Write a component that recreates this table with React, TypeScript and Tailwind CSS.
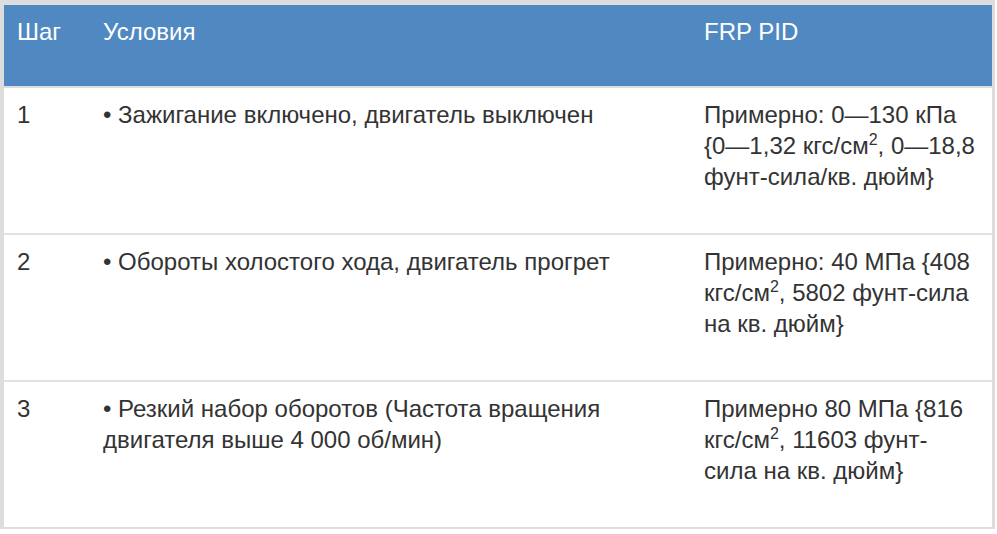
const Sup = () => <sup className="text-[16px] top-[-9px]">2</sup>;

const rows = [
  {
    step: "1",
    cond: "• Зажигание включено, двигатель выключен",
    pid: (
      <>
        Примерно: <span className="whitespace-nowrap">0—130</span> кПа{" "}
        <span className="whitespace-nowrap">{"{"}0—1,32</span> кгс/см<Sup />,{" "}
        <span className="whitespace-nowrap">0—18,8</span> фунт-сила/кв. дюйм{"}"}
      </>
    ),
  },
  {
    step: "2",
    cond: "• Обороты холостого хода, двигатель прогрет",
    pid: (
      <>
        Примерно: 40 МПа {"{"}408 кгс/см<Sup />, 5802 фунт-сила на кв. дюйм{"}"}
      </>
    ),
  },
  {
    step: "3",
    cond: "• Резкий набор оборотов (Частота вращения двигателя выше 4 000 об/мин)",
    pid: (
      <>
        Примерно 80 МПа {"{"}816 кгс/см<Sup />, 11603 фунт-сила на кв. дюйм{"}"}
      </>
    ),
  },
];

export default function App() {
  return (
    <div className="w-[997px] h-[534px] bg-white font-['Liberation_Sans',Arial,sans-serif] text-[24px] leading-[31px] text-[#333]">
      <div className="w-[995px] border-t-[5px] border-l-[4px] border-r-[3px] border-b-[2px] border-[#dddddd]">
        <div className="grid grid-cols-[86px_601px_302px] h-[83px] bg-[#5088c1] text-white border-b-[2px] border-[#dddddd]">
          <div className="px-[13px] pt-[11px]">Шаг</div>
          <div className="px-[13px] pt-[11px]">Условия</div>
          <div className="pl-[13px] pt-[11px]">FRP PID</div>
        </div>
        {rows.map((r, i) => (
          <div
            key={r.step}
            className={
              i < rows.length - 1
                ? "grid grid-cols-[86px_601px_302px] h-[147px] border-b-[2px] border-[#e2e2e2]"
                : "grid grid-cols-[86px_601px_302px] h-[145px]"
            }
          >
            <div className="px-[13px] pt-[11px]">{r.step}</div>
            <div className="pl-[13px] pr-[10px] pt-[11px]">{r.cond}</div>
            <div className="pl-[13px] pr-[17px] pt-[11px]">{r.pid}</div>
          </div>
        ))}
      </div>
    </div>
  );
}
